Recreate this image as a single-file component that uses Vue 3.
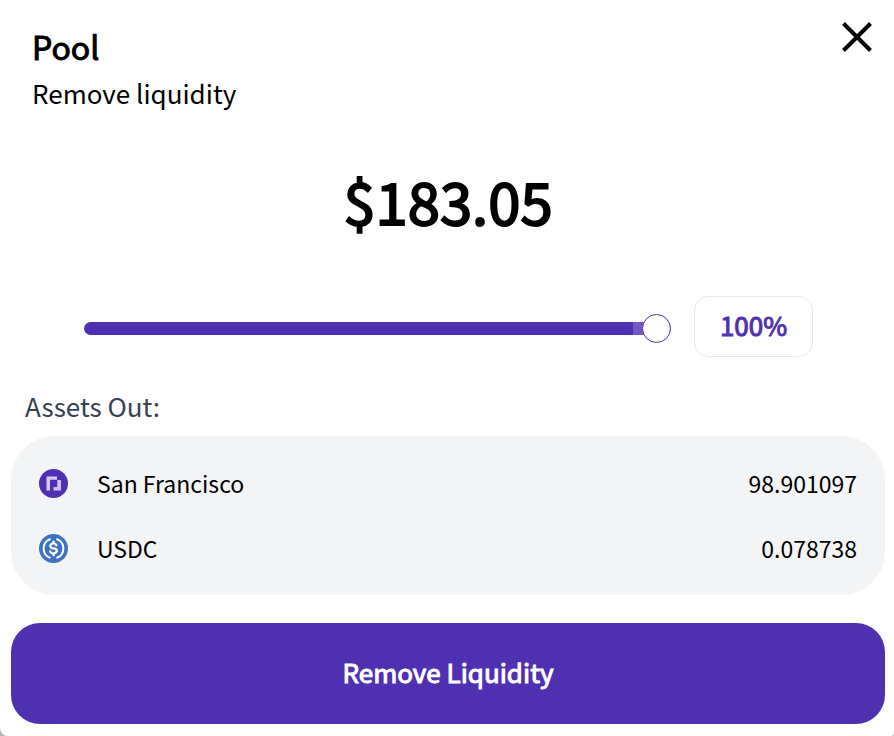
<script setup>
import { computed, ref } from 'vue'

const total = 183.05
const percent = ref(100)
const amount = computed(() => '$' + ((total * percent.value) / 100).toFixed(2))
// The fill ends just short of the thumb's far edge.
const fill = computed(() => percent.value * 0.936 + '%')
</script>

<template>
  <main class="modal">
    <header class="header">
      <div>
        <h1 class="title">Pool</h1>
        <p class="subtitle">Remove liquidity</p>
      </div>
      <button class="close" type="button" aria-label="Close">
        <svg viewBox="0 0 30 30" width="30" height="30" aria-hidden="true">
          <path d="M1.5 1.5 28.5 28.5M28.5 1.5 1.5 28.5" fill="none" stroke="currentColor" stroke-width="4" />
        </svg>
      </button>
    </header>

    <p class="amount">{{ amount }}</p>

    <div class="control">
      <input
        v-model.number="percent"
        class="slider"
        type="range"
        min="0"
        max="100"
        aria-label="Percentage to remove"
        :style="{ '--fill': fill }"
      />
      <output class="percent">{{ percent }}%</output>
    </div>

    <h2 class="assets-title">Assets Out:</h2>
    <ul class="assets">
      <li class="asset">
        <svg class="token" viewBox="0 0 29 29" aria-hidden="true">
          <circle cx="14.5" cy="14.5" r="14.5" fill="#4f30b0" />
          <path d="M7.5 7.5H18V10.7H11V21.5H7.5Z" fill="#d7c9f3" />
          <path d="M18.3 11H22V21.5H14.5V18H18.3Z" fill="#d0c0f0" />
        </svg>
        <span class="name">San Francisco</span>
        <span>98.901097</span>
      </li>
      <li class="asset">
        <svg class="token" viewBox="0 0 32 32" aria-hidden="true">
          <circle cx="16" cy="16" r="16" fill="#3e73c4" />
          <path
            d="M20.02 18.12c0-2.12-1.28-2.85-3.83-3.15-1.82-.24-2.18-.73-2.18-1.58s.61-1.39 1.82-1.39c1.09 0 1.7.36 2 1.27.06.18.24.3.43.3h.97a.42.42 0 0 0 .42-.42v-.06a3.03 3.03 0 0 0-2.73-2.49V9.15c0-.25-.18-.43-.48-.49h-.91c-.25 0-.43.18-.49.49v1.39c-1.82.25-2.97 1.46-2.97 2.97 0 2 1.21 2.79 3.76 3.1 1.7.3 2.25.66 2.25 1.63s-.85 1.64-2 1.64c-1.58 0-2.13-.67-2.31-1.58a.43.43 0 0 0-.42-.36h-1.03a.42.42 0 0 0-.43.42v.06c.24 1.52 1.21 2.61 3.21 2.92v1.45c0 .25.18.43.49.49h.91c.24 0 .42-.18.48-.49v-1.45c1.82-.31 3.04-1.58 3.04-3.22z"
            fill="#fff"
            stroke="#fff"
            stroke-width="0.4"
            transform="translate(-2.4 -2.4) scale(1.15)"
          />
          <path d="M12 5.8a11 11 0 0 0 0 20.4M20 5.8a11 11 0 0 1 0 20.4" fill="none" stroke="#fff" stroke-width="2.2" stroke-linecap="round" />
        </svg>
        <span class="name">USDC</span>
        <span>0.078738</span>
      </li>
    </ul>

    <button class="submit" type="button">Remove Liquidity</button>
  </main>
</template>

<style>
body {
  background: #b4b4b8;
}
</style>

<style scoped>
.modal {
  box-sizing: border-box;
  min-height: 100vh;
  padding: 20px 9px 12px 11px;
  border-radius: 0 0 3px 8px;
  background: #fff;
  color: #000;
  font-family: "Noto Sans CJK SC", "Noto Sans", sans-serif;
  font-size: 26px;
}

.header {
  display: flex;
  justify-content: space-between;
  padding: 0 13px 0 21px;
}

.title,
.subtitle,
.amount,
.assets-title {
  margin: 0;
  font-weight: 400;
}

.title,
.percent,
.submit {
  -webkit-text-stroke: 1px currentColor;
}

.title {
  font-size: 32px;
  line-height: 52px;
}

.subtitle {
  line-height: 42px;
}

.close {
  align-self: flex-start;
  margin-top: 2px;
  padding: 0;
  border: 0;
  background: none;
  color: inherit;
  cursor: pointer;
}

.close svg {
  display: block;
}

.amount {
  padding: 44px 0 54px;
  font-size: 58px;
  line-height: 84px;
  text-align: center;
  -webkit-text-stroke: 2px currentColor;
}

.control {
  display: flex;
  align-items: center;
  gap: 23px;
  padding: 0 72px 0 73px;
}

.slider {
  flex: 1;
  min-width: 0;
  height: 13px;
  margin: 4px 0 0;
  border-radius: 7px;
  appearance: none;
  background: linear-gradient(to right, #4f30b0 var(--fill), #7658c2 var(--fill));
  cursor: pointer;
}

.slider::-webkit-slider-thumb {
  width: 29px;
  height: 29px;
  border: 1px solid #4f30b0;
  border-radius: 50%;
  appearance: none;
  background: #fff;
}

.percent {
  box-sizing: border-box;
  width: 119px;
  padding-bottom: 4px;
  border: 1px solid #e5e7eb;
  border-radius: 14px;
  color: #4f30b0;
  line-height: 55px;
  text-align: center;
}

.assets-title {
  padding: 28px 14px 10px;
  color: #374151;
  font-size: 26px;
  line-height: 41px;
}

.assets {
  display: grid;
  gap: 29px;
  margin: 0;
  padding: 29px 28px;
  border-radius: 43px;
  background: #f3f4f6;
  font-size: 23px;
  line-height: 36px;
  list-style: none;
}

.asset {
  display: flex;
  align-items: center;
}

.token {
  width: 29px;
  height: 29px;
  margin-right: 29px;
}

.name {
  flex: 1;
}

.submit {
  width: 100%;
  height: 101px;
  margin-top: 28px;
  padding: 0 0 4px;
  border: 0;
  border-radius: 29px;
  background: #4f30b0;
  color: #fff;
  font: inherit;
  cursor: pointer;
}
</style>
